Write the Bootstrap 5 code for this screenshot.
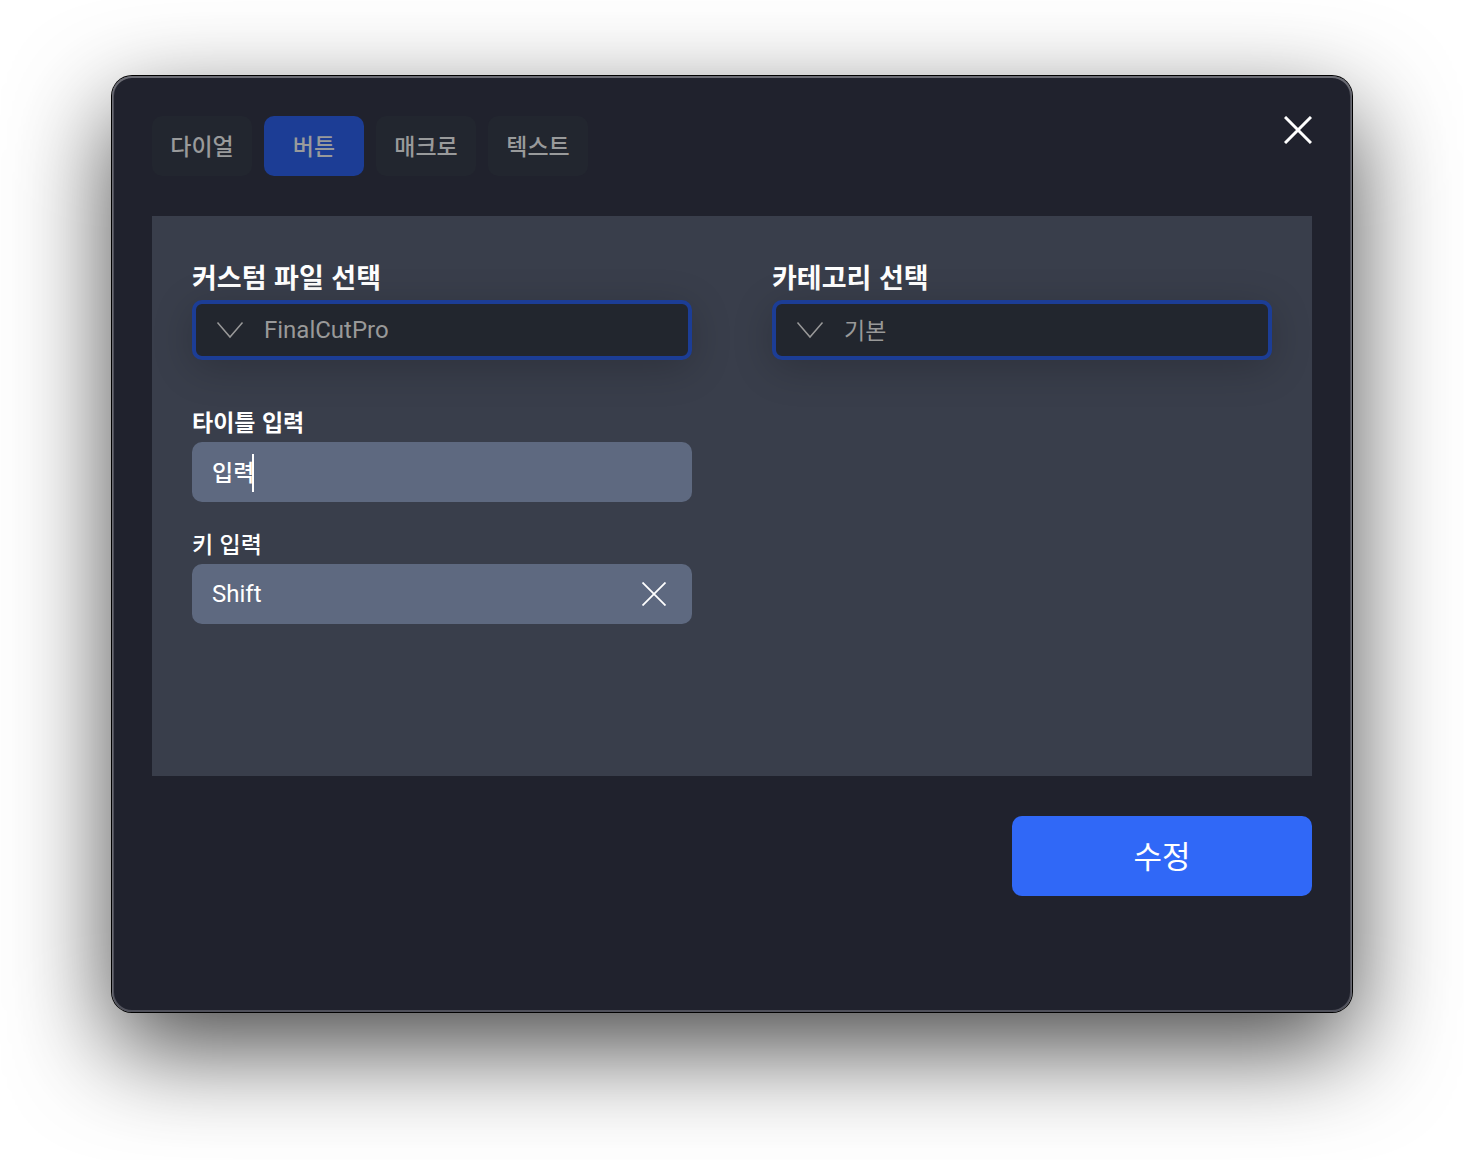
<!DOCTYPE html>
<html lang="ko">
<head>
<meta charset="utf-8">
<meta name="viewport" content="width=device-width, initial-scale=1">
<title>버튼 수정</title>
<link rel="stylesheet" href="https://cdn.jsdelivr.net/npm/bootstrap@5.3.0/dist/css/bootstrap.min.css">
<style>
  body {
    background: #fff;
    color: #fff;
    font-family: "Noto Sans CJK KR", sans-serif;
    font-size: 23px;
    line-height: 36px;
    min-height: 100vh;
    padding: 76px 112px 148px;
  }
  .app-window {
    background: #20222d;
    border-radius: 20px;
    padding: 40px;
    box-shadow:
      inset 0 1px 0 1px #6b6c74,
      inset 0 0 0 2px #50515b,
      0 0 0 1px #000,
      0 36px 100px rgba(0, 0, 0, .72);
  }
  .tab-list { gap: 12px; }
  .tab-btn {
    --bs-btn-font-size: 23px;
    --bs-btn-font-weight: 500;
    --bs-btn-line-height: 36px;
    --bs-btn-color: #999a9b;
    --bs-btn-bg: #22262f;
    --bs-btn-border-width: 0;
    --bs-btn-border-radius: 10px;
    --bs-btn-padding-x: 0;
    --bs-btn-padding-y: 0;
    --bs-btn-hover-color: #fff;
    --bs-btn-hover-bg: #2b303a;
    --bs-btn-active-color: #999a9b;
    --bs-btn-active-bg: #1c3d95;
    width: 100px;
    height: 60px;
  }
  .tab-btn, .submit-btn { padding-bottom: 2px; }
  .icon-btn { line-height: 0; color: #fff; }
  .icon-btn svg, .select-box svg { fill: none; stroke: currentColor; display: block; }
  .panel {
    background: #393e4b;
    margin-top: 40px;
    padding: 40px;
    min-height: 560px;
  }
  .panel .row { --bs-gutter-x: 80px; }
  .field-label { display: block; line-height: 36px; margin-bottom: 3px; }
  .label-lg { font-size: 27px; line-height: 41px; }
  .select-box { color: #999; }
  .select-box + .title-field { margin-top: 43px; }
  .select-box svg { left: 24px; top: 21px; pointer-events: none; }
  .select-box select, .field-input {
    width: 100%;
    height: 60px;
    border-radius: 10px;
    outline: 0;
  }
  .select-box select {
    appearance: none;
    background: #22262e;
    border: 4px solid #1c3d95;
    color: #999;
    padding: 0 20px 2px 68px;
    box-shadow: 0 8px 40px rgba(0, 0, 0, .2);
  }
  .select-box option { background: #22262e; }
  .field-input {
    background: #5e6980;
    border: 0;
    color: #fff;
    font-weight: 500;
    padding: 0 20px 2px;
    caret-color: transparent;
  }
  .select-box .latin, .latin {
    font-family: Roboto, "Noto Sans CJK KR", sans-serif;
    font-size: 24px;
    font-weight: 400;
    padding-bottom: 0;
  }
  .key-field { margin-top: 23px; }
  .text-caret { left: 60px; top: 12px; width: 2px; height: 38px; background: #fff; }
  .clear-btn { right: 26px; top: 18px; }
  .submit-btn {
    --bs-btn-font-size: 31px;
    --bs-btn-line-height: 44px;
    --bs-btn-bg: #3068f7;
    --bs-btn-color: #fff;
    --bs-btn-hover-color: #fff;
    --bs-btn-hover-bg: #2659de;
    --bs-btn-border-width: 0;
    --bs-btn-border-radius: 10px;
    --bs-btn-padding-y: 0;
    width: 300px;
    height: 80px;
    margin-top: 40px;
  }
</style>
</head>
<body class="d-flex flex-column">
<main class="app-window flex-grow-1">
  <header class="d-flex justify-content-between align-items-start">
    <nav class="tab-list d-flex">
      <button type="button" class="btn tab-btn">다이얼</button>
      <button type="button" class="btn tab-btn active" aria-current="page">버튼</button>
      <button type="button" class="btn tab-btn">매크로</button>
      <button type="button" class="btn tab-btn">텍스트</button>
    </nav>
    <button type="button" class="icon-btn bg-transparent border-0 p-0" aria-label="닫기">
      <svg width="28" height="28" viewBox="0 0 28 28" stroke-width="3"><path d="M1 1 27 27M27 1 1 27"/></svg>
    </button>
  </header>

  <form>
    <section class="panel">
      <div class="row">
        <div class="col-6">
          <label class="field-label label-lg fw-bold" for="customFile">커스텀 파일 선택</label>
          <div class="select-box position-relative">
            <select id="customFile" class="latin"><option>FinalCutPro</option></select>
            <svg class="position-absolute" width="28" height="18" viewBox="0 0 28 18" stroke-width="1.5"><path d="M1.5 1.5 14 16 26.500 1.500"/></svg>
          </div>
          <div class="title-field">
            <label class="field-label fw-bold" for="titleInput">타이틀 입력</label>
            <div class="position-relative">
              <input id="titleInput" class="field-input" type="text" value="입력">
              <span class="text-caret position-absolute"></span>
            </div>
          </div>
          <div class="key-field">
            <label class="field-label fw-medium" for="keyInput">키 입력</label>
            <div class="position-relative">
              <input id="keyInput" class="field-input latin" type="text" value="Shift">
              <button type="button" class="icon-btn clear-btn position-absolute bg-transparent border-0 p-0" aria-label="지우기">
                <svg width="24" height="24" viewBox="0 0 24 24" stroke-width="1.8"><path d="M.5.5 23.500 23.500M23.500.5.5 23.500"/></svg>
              </button>
            </div>
          </div>
        </div>
        <div class="col-6">
          <label class="field-label label-lg fw-bold" for="category">카테고리 선택</label>
          <div class="select-box position-relative">
            <select id="category"><option>기본</option></select>
            <svg class="position-absolute" width="28" height="18" viewBox="0 0 28 18" stroke-width="1.5"><path d="M1.5 1.5 14 16 26.500 1.500"/></svg>
          </div>
        </div>
      </div>
    </section>
    <div class="d-flex justify-content-end">
      <button type="submit" class="btn submit-btn">수정</button>
    </div>
  </form>
</main>
<script src="https://cdn.jsdelivr.net/npm/bootstrap@5.3.0/dist/js/bootstrap.bundle.min.js"></script>
</body>
</html>
